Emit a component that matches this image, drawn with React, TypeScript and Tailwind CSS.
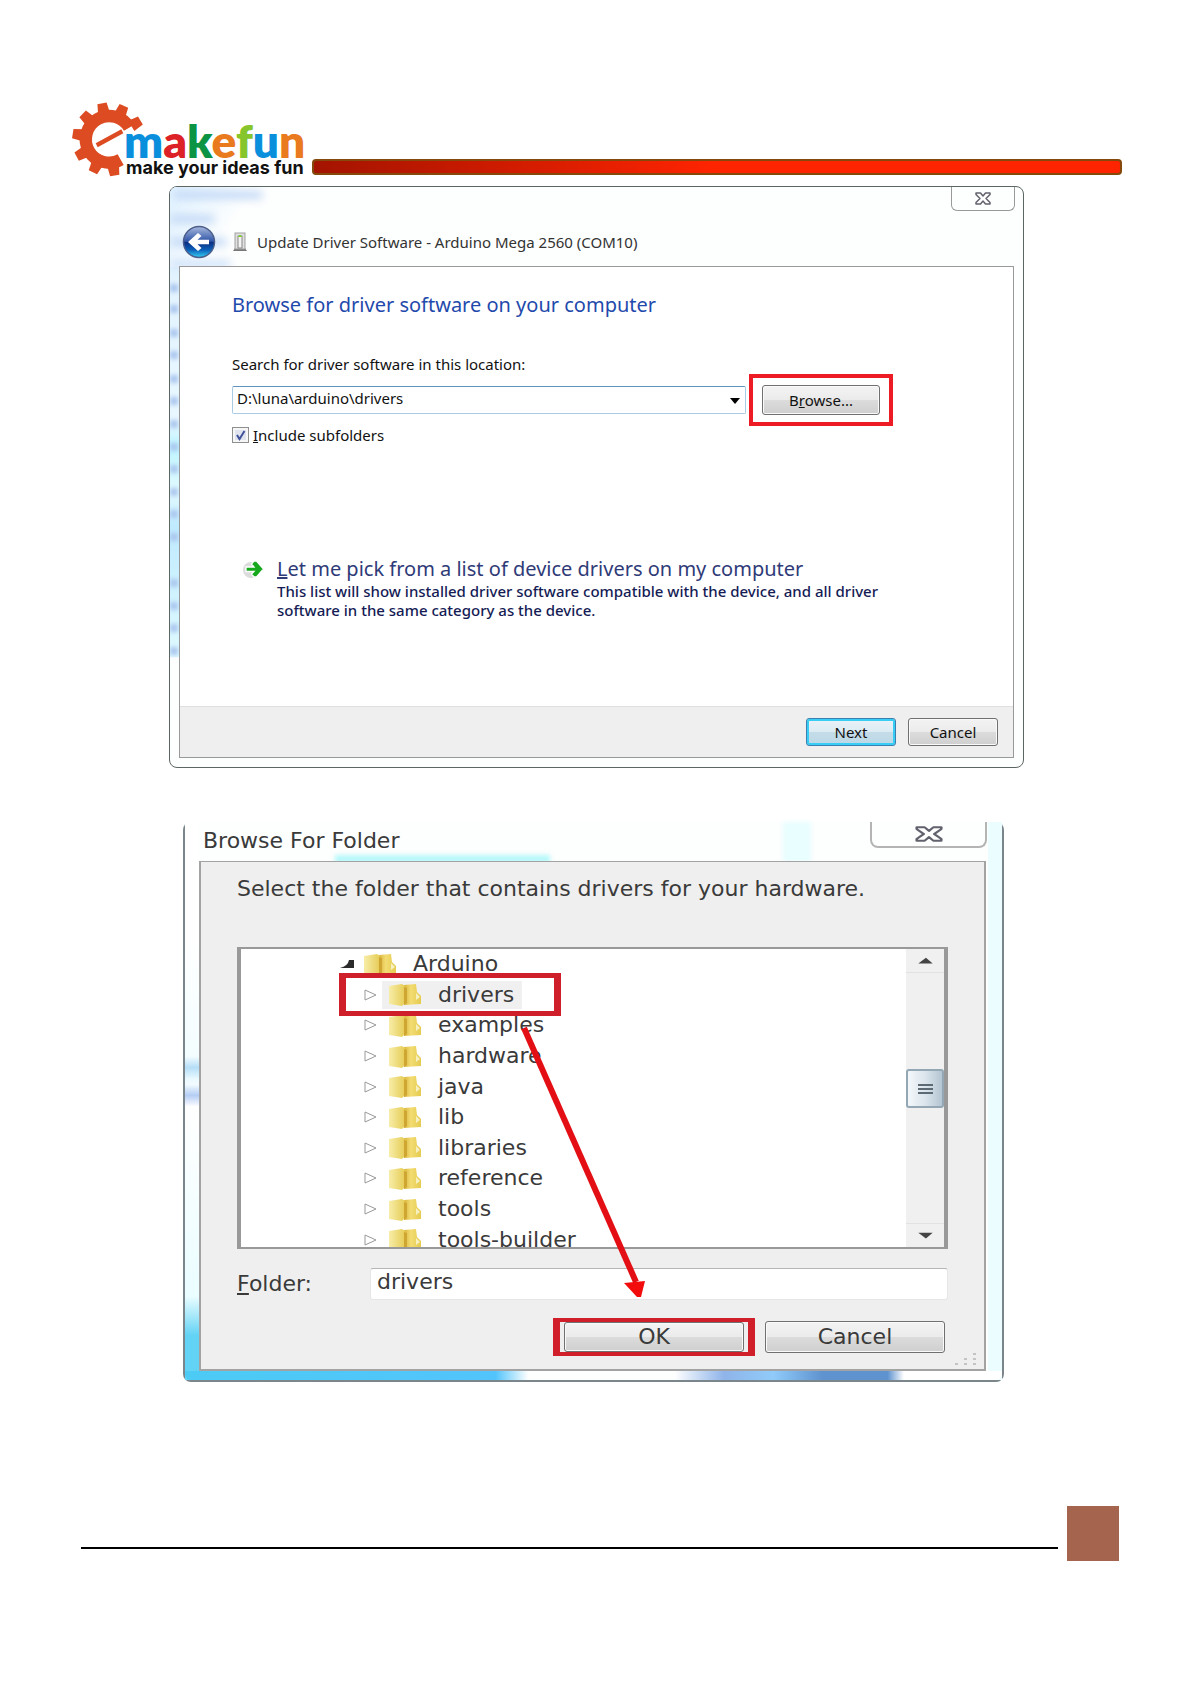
import type { ReactNode } from "react"

const toothAngles = [-31, -66, -101, -136, -171, 152, 116, 81]

// brand mark: gear with an "e" cut out of it, then the coloured name
function Logo() {
  return (
    <svg viewBox="12 12 234 76" className="w-[234px] h-[76px] shrink-0">
      <g transform="scale(0.3333)" fill="#dd4b22">
        <path d="M208 113 A70 70 0 1 0 182 209" fill="none" stroke="#dd4b22" strokeWidth="37" />
        {toothAngles.map((angle) => (
          <path key={angle} d="M78 -18 L110 -14 L110 14 L78 18 Z" transform={`translate(147 148) rotate(${angle})`} />
        ))}
        <path d="M107 160 L184 118 L190 130 L113 172 Z" />
      </g>
      <text x="64" y="68" fontFamily="Lato" fontWeight="800" fontSize="46">
        <tspan fill="#0a8fdc">m</tspan>
        <tspan fill="#dc2127">a</tspan>
        <tspan fill="#0b9444">k</tspan>
        <tspan fill="#e97b1e">e</tspan>
        <tspan fill="#86c52c">f</tspan>
        <tspan fill="#0a8fdc">u</tspan>
        <tspan fill="#e97b1e">n</tspan>
      </text>
      <text x="66" y="84" fontFamily="Inter" fontWeight="700" fontSize="18" fill="#111">
        make your ideas fun
      </text>
    </svg>
  )
}

function CloseIcon({ className }: { className: string }) {
  return (
    <svg viewBox="0 0 16 13" preserveAspectRatio="none" className={className}>
      <path
        d="M1 1 H5.5 L8 4 L10.500 1 H15 V2.500 L11 6.500 L15 10.500 V12 H10.500 L8 9 L5.500 12 H1 V10.500 L5 6.500 L1 2.500 Z"
        fill="#fff"
        stroke="#62626e"
        strokeWidth="1.500"
        strokeLinejoin="round"
      />
    </svg>
  )
}

function BackIcon() {
  return (
    <svg viewBox="0 0 34 34" className="w-[34px] h-[34px]">
      <defs>
        <linearGradient id="back" x1="0" y1="0" x2="0" y2="1">
          <stop offset="0" stopColor="#a9b9dc" />
          <stop offset="0.48" stopColor="#2f55a8" />
          <stop offset="0.5" stopColor="#0b2c80" />
          <stop offset="0.75" stopColor="#0a5fb8" />
          <stop offset="1" stopColor="#35d0f5" />
        </linearGradient>
      </defs>
      <circle cx="17" cy="17" r="15.500" fill="url(#back)" stroke="#4c5f8c" strokeWidth="1.500" />
      <path d="M6 17 L16 8 L19.500 11 L15.500 14.800 H27 V19.200 H15.500 L19.500 23 L16 26 Z" fill="#fff" />
    </svg>
  )
}

function DeviceIcon() {
  return (
    <svg viewBox="0 0 14 20" className="w-[14px] h-5">
      <path d="M0 19 L2 16 H12 L14 19 Z" fill="#777" />
      <rect x="2" y="1" width="10" height="16" fill="#e0e0e0" stroke="#a0a0a0" />
      <rect x="5" y="4" width="4" height="12" fill="#f4f4f4" stroke="#888" />
      <path d="M5 5 Q7 1 9 5 Z" fill="#7ed321" />
    </svg>
  )
}

function GoIcon() {
  return (
    <svg viewBox="0 0 22 20" className="w-[22px] h-5 shrink-0">
      <ellipse cx="9" cy="11" rx="8" ry="8" fill="#dcdcdc" />
      <path
        d="M4 8 H12 L9.500 5 L12 2 H14.500 L21.500 10 L14.500 18 H12 L9.500 15 L12 12.500 H4 Z"
        fill="#17a81e"
        stroke="#fff"
        strokeWidth="1.300"
      />
    </svg>
  )
}

function FolderIcon() {
  return (
    <svg viewBox="0 0 34 23" className="w-[34px] h-[23px] shrink-0">
      <defs>
        <linearGradient id="folder" x1="0" y1="0" x2="1" y2="0">
          <stop offset="0" stopColor="#f7eda8" />
          <stop offset="1" stopColor="#e6cc55" />
        </linearGradient>
        <linearGradient id="folderBack" x1="0" y1="0" x2="1" y2="0">
          <stop offset="0" stopColor="#d9b53c" />
          <stop offset="0.4" stopColor="#f3dc72" />
          <stop offset="1" stopColor="#e5cb50" />
        </linearGradient>
      </defs>
      <path d="M16 2 L28 1 L29 9 L33 13 V21 L16 22 Z" fill="url(#folderBack)" />
      <path d="M28 10 L32 14 L28 17 Z" fill="#f6efc0" />
      <path d="M1 3 L14 1 L17 3 V20 L14 23 L1 21 Z" fill="url(#folder)" />
      <path d="M16 4 V22 L19 20 V5 Z" fill="#cfa632" />
    </svg>
  )
}

function Button({ className, children }: { className: string; children: ReactNode }) {
  return (
    <button
      className={`rounded-[3px] border border-[#707070] shadow-[inset_0_0_0_1px_#fafafa] bg-[linear-gradient(#f3f3f3_0%,#ebebeb_50%,#dcdcdc_50%,#cfcfcf_100%)] ${className}`}
    >
      {children}
    </button>
  )
}

// smudges of the desktop that show through the glass frame
const glassSpots = [
  "top-[97px]", "top-[118px]", "top-[142px]", "top-[164px]", "top-[188px]", "top-[210px]", "top-[233px]", "top-[256px]",
  "top-[278px]", "top-[301px]", "top-[323px]", "top-[346px]", "top-[392px]", "top-[415px]", "top-[437px]", "top-[460px]",
]

function DriverDialog() {
  return (
    <section className="relative ml-[169px] mr-[167px] mt-2 overflow-hidden rounded-lg border border-[#5c6663] bg-[#fdfefe] px-[9px] pb-[9px] font-['Noto_Sans',sans-serif] text-[15px] text-[#111]">
      <div className="absolute left-0 top-0 h-[470px] w-[9px] bg-[linear-gradient(#dff1ff,#e9f8ff_50%,#bdf5ff_55%,#e3faff_65%,#bfeaff_72%,#dffaff)]" />
      <div className="absolute left-0 top-0 h-20 w-24 bg-[linear-gradient(120deg,#dff1ff,#fdfefe_60%)]" />
      <div className="absolute left-1 top-1 h-2 w-[88px] bg-[#c3d9f6] blur-[4px]" />
      <div className="absolute left-0 top-7 h-2 w-[44px] bg-[#c3d9f6] blur-[4px]" />
      <div className="absolute left-0 top-[51px] h-2 w-[56px] bg-[#c3d9f6] blur-[4px]" />
      <div className="absolute left-0 top-[73px] h-2 w-[60px] bg-[#cfe2f9] blur-[4px]" />
      {glassSpots.map((top) => (
        <div key={top} className={`absolute left-0 h-2 w-2 bg-[#aac6ee] blur-[2px] ${top}`} />
      ))}

      <button
        aria-label="Close"
        className="absolute right-2 top-0 flex h-6 w-16 items-center justify-center rounded-b-md border border-t-0 border-[#999]"
      >
        <CloseIcon className="h-[13px] w-4" />
      </button>

      <header className="relative flex h-[79px] items-end pb-[7px] pl-[3px]">
        <button aria-label="Back">
          <BackIcon />
        </button>
        <div className="flex h-[34px] items-center pl-[17px]">
          <DeviceIcon />
          <h1 className="pl-[10px] text-[#333]">Update Driver Software - Arduino Mega 2560 (COM10)</h1>
        </div>
      </header>

      <div className="relative border border-[#999] bg-white">
        <div className="h-[439px] pl-[52px] pt-[25px]">
          <h2 className="text-[20px] leading-[26px] text-[#1f4aac]">Browse for driver software on your computer</h2>
          <label htmlFor="location" className="mt-[36px] block leading-5">
            Search for driver software in this location:
          </label>
          <div className="flex items-center gap-[3px]">
            <div className="relative w-[514px]">
              <select
                id="location"
                className="h-7 w-full appearance-none rounded-xs border border-[#a9cbe6] border-t-[#5f93c0] bg-white pb-1 pl-1 leading-5"
              >
                <option>D:\luna\arduino\drivers</option>
              </select>
              <svg viewBox="0 0 10 6" className="pointer-events-none absolute right-[6px] top-3 h-[6px] w-[10px]">
                <path d="M0 0 H10 L5 6 Z" />
              </svg>
            </div>
            <div className="border-4 border-[#ed1c24] px-[9px] py-[7px]">
              <Button className="block h-[30px] w-[118px]">
                B<u>r</u>owse...
              </Button>
            </div>
          </div>
          <label className="flex items-center gap-1 leading-[18px]">
            <span className="relative h-4 w-[17px] border border-[#8e8f8f] bg-[#dfe4ee] shadow-[inset_0_0_0_2px_#f6f6f6]">
              <input type="checkbox" defaultChecked className="absolute inset-0 appearance-none" />
              <svg viewBox="0 0 15 14" className="pointer-events-none absolute inset-0">
                <path d="M4 7 L6.500 11 L11.500 3" fill="none" stroke="#41529a" strokeWidth="2" />
              </svg>
            </span>
            <span>
              <u>I</u>nclude subfolders
            </span>
          </label>
          <a href="#pick" className="mt-[112px] flex gap-[13px] pl-[10px] text-[#151c55]">
            <span className="pt-[3px]">
              <GoIcon />
            </span>
            <span>
              <span className="block text-[20px] leading-[26px] text-[#2f3b78]">
                <u>L</u>et me pick from a list of device drivers on my computer
              </span>
              <span className="block font-medium leading-[19px]">
                This list will show installed driver software compatible with the device, and all driver
                <br />
                software in the same category as the device.
              </span>
            </span>
          </a>
        </div>
        <footer className="flex h-[51px] items-center justify-end gap-3 border-t border-[#dfdfdf] bg-[#efefef] pr-[15px]">
          <button className="h-7 w-[90px] rounded-[3px] border border-[#3c7fb1] bg-[linear-gradient(#eaf3f8_0%,#dcebf3_50%,#c4dce8_50%,#bcd8e6_100%)] shadow-[inset_0_0_0_2px_#38cdf5]">
            Next
          </button>
          <Button className="h-7 w-[90px]">Cancel</Button>
        </footer>
      </div>
    </section>
  )
}

const folders = ["drivers", "examples", "hardware", "java", "lib", "libraries", "reference", "tools", "tools-builder"]

function FolderDialog() {
  return (
    <section className="relative ml-[183px] mr-[187px] mt-[54px] rounded-lg border-2 border-t-0 border-[#7b868c] bg-[#fdfefe] pb-[9px] pl-[14px] pr-4 font-['DejaVu_Sans',sans-serif] text-[22px] text-[#3a3a3a]">
      <div className="absolute bottom-0 left-0 top-0 w-[14px] bg-[linear-gradient(#fff_20%,#f3fdff_42%,#b5def7_44%,#e9f9ff_46%,#f3fcff_47%,#b4cdf4_49%,#fff_51%,#eafdff_85%,#63d3f5_92%)]" />
      <div className="absolute bottom-0 right-0 top-0 w-[14px] bg-[#ecfdff]" />
      <div className="absolute bottom-0 left-0 right-0 h-[9px] rounded-b-md bg-[linear-gradient(90deg,#4ccbf5,#52c4fb_38%,#fdfefe_42%,#fdfefe_60%,#8fb4ea_66%,#90cbfa_72%,#5f93cf_78%,#5f93cf_86%,#fff_88%)]" />
      <div className="absolute left-[150px] top-[33px] h-2 w-[215px] bg-[#b6f8fa] blur-[2px]" />
      <div className="absolute left-[598px] top-0 h-10 w-[28px] bg-[#e8feff] blur-[2px]" />

      <button
        aria-label="Close"
        className="absolute right-[15px] top-0 flex h-[26px] w-[117px] items-center justify-center rounded-b-lg border-2 border-t-0 border-[#b4b4b4] bg-[#fdfefe]"
      >
        <CloseIcon className="h-4 w-7" />
      </button>
      <h2 className="relative h-[39px] pl-1 pt-[7px] leading-6">Browse For Folder</h2>

      <div className="relative border-2 border-t border-[#a3a3a3] bg-[#efefef] px-[36px] pb-[13px]">
        <p className="h-[85px] whitespace-nowrap pt-[15px] leading-6">
          Select the folder that contains drivers for your hardware.
        </p>
        <div className="relative flex h-[302px] border-x-4 border-y-2 border-[#999] bg-white leading-7">
          <div className="flex-1 overflow-hidden">
            <ul className="flex h-[306px] flex-col pl-[98px]">
              <li className="flex min-h-0 flex-1 items-center">
                <svg viewBox="0 0 16 10" className="mr-2 h-[10px] w-4">
                  <path d="M1 9 Q9 7 10 1 H15 V9 Z" fill="#2b2b2b" />
                </svg>
                <FolderIcon />
                <span className="pl-4">Arduino</span>
              </li>
              {folders.map((name) => (
                <li key={name} className="flex min-h-0 flex-1 items-center pl-[25px]">
                  <svg viewBox="0 0 14 12" className="mr-1 h-3 w-[14px]">
                    <path d="M1 1 L12 6 L1 11 Z" fill="#fff" stroke="#999" />
                  </svg>
                  <span className={name === "drivers" ? "flex h-7 items-center bg-[#f0f0f0] pl-[6px] pr-2" : "flex items-center pl-[6px]"}>
                    <FolderIcon />
                    <span className="pl-4">{name}</span>
                  </span>
                </li>
              ))}
            </ul>
          </div>
          <div className="flex w-[38px] flex-col bg-[#f0f0f0]">
            <svg viewBox="0 0 38 24" className="h-6 border-b border-[#e2e2e2]">
              <path d="M12 15 L20 9 L27 15 Z" fill="#444" />
            </svg>
            <div className="mt-[96px] flex h-[39px] flex-col items-center justify-center gap-[2px] rounded-[3px] border-2 border-[#94a7b5] bg-[linear-gradient(90deg,#f3f7fa,#dbe5ec_50%,#b4c5d2)]">
              <div className="h-[2px] w-[15px] bg-[#5b6a75]" />
              <div className="h-[2px] w-[15px] bg-[#5b6a75]" />
              <div className="h-[2px] w-[15px] bg-[#5b6a75]" />
            </div>
            <svg viewBox="0 0 38 24" className="mt-auto h-6 border-t border-[#e2e2e2]">
              <path d="M12 9 L27 9 L20 15 Z" fill="#444" />
            </svg>
          </div>
          <div className="absolute left-[98px] top-[24px] h-[43px] w-[222px] border-x-[7px] border-y-[5px] border-[#cf1f2b]" />
        </div>
        <div className="mt-[18px] flex items-center">
          <label htmlFor="folder" className="w-[133px]">
            <u>F</u>older:
          </label>
          <input
            id="folder"
            defaultValue="drivers"
            className="h-8 min-w-0 flex-1 rounded-[3px] border border-[#e6e6e6] border-t-[#b5b5b5] bg-white pb-1 pl-[6px]"
          />
        </div>
        <div className="mt-[18px] flex items-center justify-end gap-[10px] pr-[3px] leading-7">
          <div className="border-x-[7px] border-y-4 border-[#d01f2a] px-[4px]">
            <Button className="block h-[30px] w-[180px]">OK</Button>
          </div>
          <Button className="h-8 w-[180px]">Cancel</Button>
        </div>
        <svg viewBox="0 0 24 14" className="absolute bottom-[2px] right-[6px] h-[14px] w-6" fill="#c4c4c4">
          <path d="M1 10 h3 v2 h-3z M10 10 h3 v2 h-3z M19 10 h3 v2 h-3z M10 5 h3 v2 h-3z M19 5 h3 v2 h-3z M19 0 h3 v2 h-3z" />
        </svg>
      </div>

      {/* arrow from the drivers folder to OK */}
      <svg viewBox="0 0 130 276" className="pointer-events-none absolute left-[335px] top-[204px] h-[276px] w-[130px]">
        <path d="M4 2 L116 256" stroke="#e30f14" strokeWidth="6" />
        <path d="M104 257 L125 255 L121 271 L117 271 Z" fill="#f20c0c" />
      </svg>
    </section>
  )
}

export default function App() {
  return (
    <div className="min-h-screen bg-white pb-[123px] pt-[102px]">
      <header className="flex items-end gap-[6px] pl-[72px] pr-[69px]">
        <Logo />
        <div className="mb-[3px] h-4 flex-1 rounded-[4px] border-2 border-[#84490b] bg-[linear-gradient(90deg,#a31400,#c81a00_20%,#ff2400_50%)]" />
      </header>
      <main>
        <DriverDialog />
        <FolderDialog />
      </main>
      <footer className="mt-[124px] flex items-end gap-[9px] pl-[81px] pr-[72px]">
        <div className="mb-3 h-[2px] flex-1 bg-black" />
        <div className="h-[55px] w-[52px] bg-[#a5644e]" />
      </footer>
    </div>
  )
}
